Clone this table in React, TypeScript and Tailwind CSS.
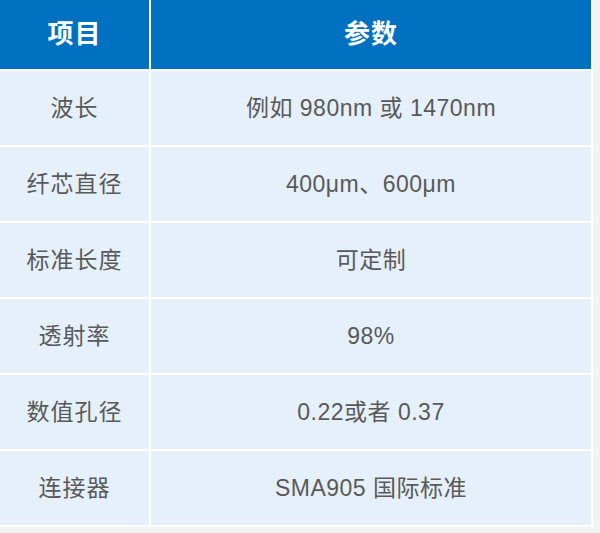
import React from "react";

const rows: [string, string][] = [
  ["波长", "例如 980nm 或 1470nm"],
  ["纤芯直径", "400μm、600μm"],
  ["标准长度", "可定制"],
  ["透射率", "98%"],
  ["数值孔径", "0.22或者 0.37"],
  ["连接器", "SMA905 国际标准"],
];

export default function App() {
  return (
    <div
      className="w-[600px] h-[533px] bg-[#f3f3f3] overflow-hidden"
      style={{ fontFamily: '"Liberation Sans", "Noto Sans CJK SC", sans-serif' }}
    >
      <div className="w-[593px] bg-white pr-[2px] pb-[2px]">
        <div className="grid grid-cols-[149px_440px] gap-[2px]">
          <div className="h-[69px] bg-[#0070c0] flex items-center justify-center text-white font-bold text-[26px] tracking-[1px]">
            项目
          </div>
          <div className="h-[69px] bg-[#0070c0] flex items-center justify-center text-white font-bold text-[26px] tracking-[1px]">
            参数
          </div>
          {rows.map(([a, b], i) => (
            <React.Fragment key={i}>
              <div className="h-[74px] bg-[#e6f0fa] flex items-center justify-center text-[#595959] text-[23px] tracking-[1px]">
                {a}
              </div>
              <div className="h-[74px] bg-[#e6f0fa] flex items-center justify-center text-[#595959] text-[23px] tracking-[0.5px]">
                {b}
              </div>
            </React.Fragment>
          ))}
        </div>
      </div>
    </div>
  );
}
